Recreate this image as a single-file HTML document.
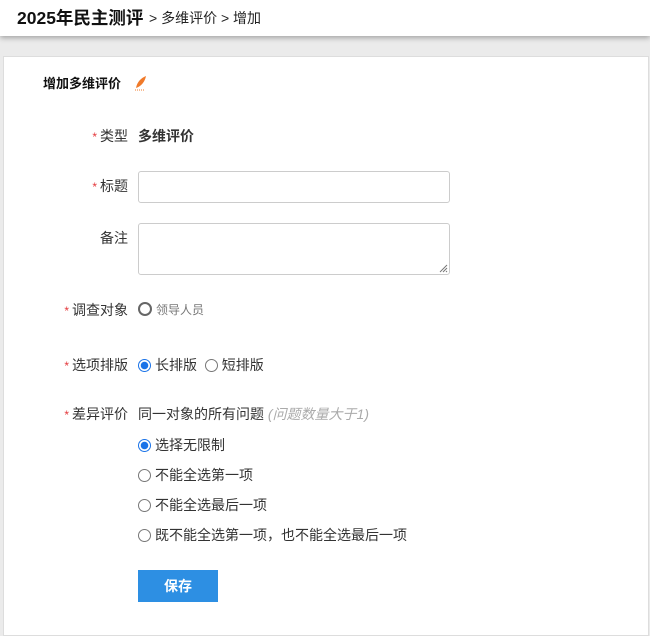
<!DOCTYPE html>
<html><head><meta charset="utf-8"><style>
*{margin:0;padding:0;box-sizing:border-box}
body{width:650px;height:620px;overflow:hidden;background:#ebebeb;font-family:"Liberation Sans","Noto Sans CJK SC",sans-serif;color:#333;font-size:14px;position:relative}
.hdr{position:absolute;left:0;top:0;width:650px;height:36px;background:#fff;box-shadow:0 2px 5px rgba(0,0,0,.3)}
.t{position:absolute;left:17px;top:5px;font-size:17.5px;font-weight:bold;color:#111}
.bc{position:absolute;left:149px;top:8px;font-size:14px;color:#222}
.panel{position:absolute;left:3px;top:56px;width:646px;height:580px;background:#fff;border:1px solid #ddd}
.a{position:absolute;white-space:nowrap}
.lbl{position:absolute;right:522px;white-space:nowrap;color:#333}
.s{color:#e4393c;margin-right:3px;font-size:12px}
.inp{position:absolute;left:138px;width:312px;border:1px solid #ccc;border-radius:3px;background:#fff}
.r{display:inline-block;width:13px;height:13px;border:1px solid #666;border-radius:50%;vertical-align:-2px;margin-right:4px;background:#fff}
.r.on{border:1px solid #1a73e8;background:radial-gradient(circle,#1a73e8 0 3.5px,#fff 4px)}
.btn{position:absolute;left:138px;top:570px;width:80px;height:32px;background:#2d8fe3;color:#fff;font-weight:bold;font-size:14px;text-align:center;line-height:32px}
</style></head><body>
<div class="hdr"><div class="t">2025年民主测评</div><div class="bc">&gt; 多维评价 &gt; 增加</div></div>
<div class="panel"></div>
<div class="a" style="left:43px;top:73px;font-weight:bold;color:#111;font-size:13px">增加多维评价</div>
<svg class="a" style="left:134px;top:75px" width="14" height="16" viewBox="0 0 14 16"><path d="M2 13 C3 7 7 3 12 1 C11 6 8 11 2 13Z" fill="#f07a2a"/><path d="M1 15 H11" stroke="#f07a2a" stroke-dasharray="1 1"/></svg>
<div class="lbl" style="top:126px"><span class="s">*</span>类型</div>
<div class="a" style="left:138px;top:126px;font-weight:bold">多维评价</div>
<div class="lbl" style="top:176px"><span class="s">*</span>标题</div>
<div class="inp" style="top:171px;height:32px"></div>
<div class="lbl" style="top:228px">备注</div>
<div class="inp" style="top:223px;height:52px"></div>
<svg class="a" style="left:439px;top:264px" width="9" height="9"><path d="M1 8L8 1M4 8L8 4M7 8L8 7" stroke="#777"/></svg>
<div class="lbl" style="top:300px"><span class="s">*</span>调查对象</div>
<div class="a" style="left:138px;top:301px;color:#777;font-size:12px"><span class="r" style="width:14px;height:14px;border:2px solid #666"></span>领导人员</div>
<div class="lbl" style="top:355px"><span class="s">*</span>选项排版</div>
<div class="a" style="left:138px;top:355px"><span class="r on"></span>长排版 &nbsp;<span class="r" style="border-color:#777"></span>短排版</div>
<div class="lbl" style="top:404px"><span class="s">*</span>差异评价</div>
<div class="a" style="left:138px;top:404px">同一对象的所有问题 <i style="color:#aaa">(问题数量大于1)</i></div>
<div class="a" style="left:138px;top:435px"><span class="r on"></span>选择无限制</div>
<div class="a" style="left:138px;top:465px"><span class="r" style="border-color:#777"></span>不能全选第一项</div>
<div class="a" style="left:138px;top:495px"><span class="r" style="border-color:#777"></span>不能全选最后一项</div>
<div class="a" style="left:138px;top:525px"><span class="r" style="border-color:#777"></span>既不能全选第一项，也不能全选最后一项</div>
<div class="btn">保存</div>
</body></html>
